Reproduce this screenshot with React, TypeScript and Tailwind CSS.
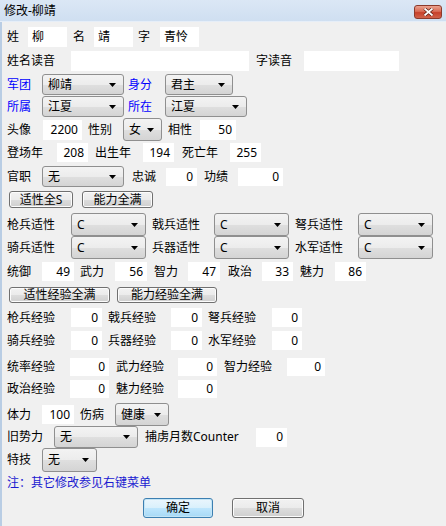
import React from "react";

const FONT = "font-['Noto_Sans','Noto_Sans_CJK_SC',sans-serif]";

function Lbl({ children, className = "", blue = false }: { children: React.ReactNode; className?: string; blue?: boolean }) {
  return (
    <span className={`shrink-0 whitespace-nowrap leading-none ${blue ? "text-[#0000ff]" : "text-black"} ${className}`}>
      {children}
    </span>
  );
}

function Box({ value, className = "", left = false }: { value: string; className?: string; left?: boolean }) {
  return (
    <div
      className={`flex shrink-0 items-center bg-white px-[4px] leading-none ${left ? "justify-start" : "justify-end"} ${className}`}
    >
      {value}
    </div>
  );
}

function Combo({ value, className = "" }: { value: string; className?: string }) {
  return (
    <div
      className={`relative flex shrink-0 items-center rounded-[3px] border border-[#8f8f8f] bg-[linear-gradient(#f3f3f3,#ececec_50%,#dfdfdf_51%,#d4d4d4)] pl-[5px] leading-none ${className}`}
    >
      <span>{value}</span>
      <svg className="absolute right-[7px] top-1/2 -translate-y-1/2" width="7" height="4" viewBox="0 0 7 4">
        <path d="M0 0h7L3.5 4z" fill="#000" />
      </svg>
    </div>
  );
}

function Btn({ children, className = "", primary = false }: { children: React.ReactNode; className?: string; primary?: boolean }) {
  return (
    <button
      className={`flex shrink-0 items-center justify-center rounded-[3px] border leading-none ${
        primary
          ? "border-[#3c7fb1] bg-[linear-gradient(#eaf6fd,#d9f0fc_50%,#bee6fd_51%,#a7d9f5)] shadow-[inset_0_0_0_1px_#c4e5f6]"
          : "border-[#707070] bg-[linear-gradient(#f2f2f2,#ebebeb_50%,#dddddd_51%,#cfcfcf)] shadow-[inset_0_0_0_1px_#fcfcfc]"
      } ${className}`}
    >
      {children}
    </button>
  );
}

export default function App() {
  return (
    <div className={`w-[446px] h-[526px] overflow-hidden bg-[#f0f0f0] text-[12px] text-black ${FONT}`}>
      {/* title bar */}
      <div className="relative flex h-[22px] items-center border-b border-[#e6eef8] bg-[linear-gradient(#dbe7f5,#cfdff1)] pl-[4px]">
        <span className="text-[12px] leading-none">修改-柳靖</span>
        <div className="absolute right-[4px] top-[5px] flex h-[14px] w-[28px] items-center justify-center rounded-[3px] border border-[#8b3a2c] bg-[linear-gradient(#eba391,#d86b55_45%,#c7412b_55%,#d0624a)]">
          <svg width="11" height="8" viewBox="0 0 11 8">
            <path d="M1.5 0.5l8 7M9.5 0.5l-8 7" stroke="#5a1d12" strokeWidth="3.2" />
            <path d="M1.5 0.5l8 7M9.5 0.5l-8 7" stroke="#fff" strokeWidth="1.8" />
          </svg>
        </div>
      </div>

      <div className="flex flex-col border-l-2 border-[#b9cde4] h-[504px]">
        {/* 姓名字 */}
        <div className="mt-[5px] flex h-[20px] items-center pl-[5px]">
          <Lbl className="w-[21px]">姓</Lbl>
          <Box left value="柳" className="h-[20px] w-[39px]" />
          <Lbl className="ml-[6px] w-[21px]">名</Lbl>
          <Box left value="靖" className="h-[20px] w-[39px]" />
          <Lbl className="ml-[5px] w-[22px]">字</Lbl>
          <Box left value="青怜" className="h-[20px] w-[39px]" />
        </div>

        <div className="mt-[4px] flex h-[20px] items-center pl-[5px]">
          <Lbl className="w-[64px]">姓名读音</Lbl>
          <Box left value="" className="h-[20px] w-[178px]" />
          <Lbl className="ml-[7px] w-[48px]">字读音</Lbl>
          <Box left value="" className="h-[20px] w-[95px]" />
        </div>

        <div className="mt-[3px] flex h-[21px] items-center pl-[5px]">
          <Lbl blue className="w-[35px]">军团</Lbl>
          <Combo value="柳靖" className="h-[21px] w-[82px]" />
          <Lbl blue className="ml-[4px] w-[37px]">身分</Lbl>
          <Combo value="君主" className="h-[21px] w-[68px]" />
        </div>

        <div className="mt-[1px] flex h-[21px] items-center pl-[5px]">
          <Lbl blue className="w-[35px]">所属</Lbl>
          <Combo value="江夏" className="h-[21px] w-[82px]" />
          <Lbl blue className="ml-[4px] w-[37px]">所在</Lbl>
          <Combo value="江夏" className="h-[21px] w-[82px]" />
        </div>

        <div className="mt-[1px] flex h-[23px] items-center pl-[5px]">
          <Lbl className="w-[36px]">头像</Lbl>
          <Box value="2200" className="h-[20px] w-[39px]" />
          <Lbl className="ml-[6px] w-[35px]">性别</Lbl>
          <Combo value="女" className="h-[23px] w-[39px]" />
          <Lbl className="ml-[6px] w-[32px]">相性</Lbl>
          <Box value="50" className="h-[20px] w-[36px]" />
        </div>

        <div className="mt-[2px] flex h-[19px] items-center pl-[5px]">
          <Lbl className="w-[50px]">登场年</Lbl>
          <Box value="208" className="h-[19px] w-[31px]" />
          <Lbl className="ml-[7px] w-[48px]">出生年</Lbl>
          <Box value="194" className="h-[19px] w-[31px]" />
          <Lbl className="ml-[8px] w-[48px]">死亡年</Lbl>
          <Box value="255" className="h-[19px] w-[31px]" />
        </div>

        <div className="mt-[4px] flex h-[21px] items-center pl-[5px]">
          <Lbl className="w-[35px]">官职</Lbl>
          <Combo value="无" className="h-[21px] w-[82px]" />
          <Lbl className="ml-[8px] w-[34px]">忠诚</Lbl>
          <Box value="0" className="h-[18px] w-[31px]" />
          <Lbl className="ml-[7px] w-[34px]">功绩</Lbl>
          <Box value="0" className="h-[18px] w-[45px]" />
        </div>

        <div className="mt-[4px] flex h-[17px] items-center pl-[7px]">
          <Btn className="h-[17px] w-[64px]">适性全S</Btn>
          <Btn className="ml-[9px] h-[17px] w-[71px]">能力全满</Btn>
        </div>

        {/* 适性 */}
        <div className="mt-[5px] flex h-[23px] items-center pl-[5px]">
          <Lbl className="w-[64px]">枪兵适性</Lbl>
          <Combo value="C" className="h-[23px] w-[75px]" />
          <Lbl className="ml-[6px] w-[62px]">戟兵适性</Lbl>
          <Combo value="C" className="h-[23px] w-[75px]" />
          <Lbl className="ml-[6px] w-[63px]">弩兵适性</Lbl>
          <Combo value="C" className="h-[23px] w-[75px]" />
        </div>

        <div className="flex h-[23px] items-center pl-[5px]">
          <Lbl className="w-[64px]">骑兵适性</Lbl>
          <Combo value="C" className="h-[23px] w-[75px]" />
          <Lbl className="ml-[6px] w-[62px]">兵器适性</Lbl>
          <Combo value="C" className="h-[23px] w-[75px]" />
          <Lbl className="ml-[6px] w-[63px]">水军适性</Lbl>
          <Combo value="C" className="h-[23px] w-[75px]" />
        </div>

        {/* 能力 */}
        <div className="mt-[3px] flex h-[19px] items-center pl-[5px]">
          <Lbl className="w-[35px]">统御</Lbl>
          <Box value="49" className="h-[19px] w-[32px]" />
          <Lbl className="ml-[6px] w-[35px]">武力</Lbl>
          <Box value="56" className="h-[19px] w-[32px]" />
          <Lbl className="ml-[7px] w-[34px]">智力</Lbl>
          <Box value="47" className="h-[19px] w-[32px]" />
          <Lbl className="ml-[8px] w-[34px]">政治</Lbl>
          <Box value="33" className="h-[19px] w-[31px]" />
          <Lbl className="ml-[7px] w-[35px]">魅力</Lbl>
          <Box value="86" className="h-[19px] w-[31px]" />
        </div>

        <div className="mt-[6px] flex h-[16px] items-center pl-[7px]">
          <Btn className="h-[16px] w-[101px]">适性经验全满</Btn>
          <Btn className="ml-[7px] h-[16px] w-[100px]">能力经验全满</Btn>
        </div>

        {/* 经验 */}
        <div className="mt-[5px] flex h-[19px] items-center pl-[5px]">
          <Lbl className="w-[64px]">枪兵经验</Lbl>
          <Box value="0" className="h-[19px] w-[31px]" />
          <Lbl className="ml-[6px] w-[63px]">戟兵经验</Lbl>
          <Box value="0" className="h-[19px] w-[31px]" />
          <Lbl className="ml-[6px] w-[64px]">弩兵经验</Lbl>
          <Box value="0" className="h-[19px] w-[30px]" />
        </div>

        <div className="mt-[4px] flex h-[19px] items-center pl-[5px]">
          <Lbl className="w-[64px]">骑兵经验</Lbl>
          <Box value="0" className="h-[19px] w-[31px]" />
          <Lbl className="ml-[6px] w-[63px]">兵器经验</Lbl>
          <Box value="0" className="h-[19px] w-[31px]" />
          <Lbl className="ml-[6px] w-[64px]">水军经验</Lbl>
          <Box value="0" className="h-[19px] w-[30px]" />
        </div>

        <div className="mt-[8px] flex h-[18px] items-center pl-[5px]">
          <Lbl className="w-[63px]">统率经验</Lbl>
          <Box value="0" className="h-[18px] w-[39px]" />
          <Lbl className="ml-[7px] w-[62px]">武力经验</Lbl>
          <Box value="0" className="h-[18px] w-[39px]" />
          <Lbl className="ml-[7px] w-[63px]">智力经验</Lbl>
          <Box value="0" className="h-[18px] w-[38px]" />
        </div>

        <div className="mt-[4px] flex h-[18px] items-center pl-[5px]">
          <Lbl className="w-[63px]">政治经验</Lbl>
          <Box value="0" className="h-[18px] w-[39px]" />
          <Lbl className="ml-[7px] w-[62px]">魅力经验</Lbl>
          <Box value="0" className="h-[18px] w-[39px]" />
        </div>

        <div className="mt-[5px] flex h-[23px] items-center pl-[5px]">
          <Lbl className="w-[35px]">体力</Lbl>
          <Box value="100" className="h-[19px] w-[32px]" />
          <Lbl className="ml-[6px] w-[35px]">伤病</Lbl>
          <Combo value="健康" className="h-[23px] w-[54px]" />
        </div>

        <div className="flex h-[22px] items-center pl-[5px]">
          <Lbl className="w-[47px]">旧势力</Lbl>
          <Combo value="无" className="h-[22px] w-[84px]" />
          <Lbl className="ml-[7px] w-[111px]">捕虏月数Counter</Lbl>
          <Box value="0" className="h-[19px] w-[31px]" />
        </div>

        <div className="flex h-[24px] items-center pl-[5px]">
          <Lbl className="w-[35px]">特技</Lbl>
          <Combo value="无" className="h-[24px] w-[55px]" />
        </div>

        <div className="mt-[4px] flex h-[14px] items-center pl-[5px]">
          <span className="whitespace-nowrap leading-none text-[#1a1ad0]">注：其它修改参见右键菜单</span>
        </div>

        <div className="mt-[8px] flex h-[20px] items-center pl-[141px]">
          <Btn primary className="h-[20px] w-[70px]">确定</Btn>
          <Btn className="ml-[19px] h-[20px] w-[72px]">取消</Btn>
        </div>
      </div>
    </div>
  );
}
